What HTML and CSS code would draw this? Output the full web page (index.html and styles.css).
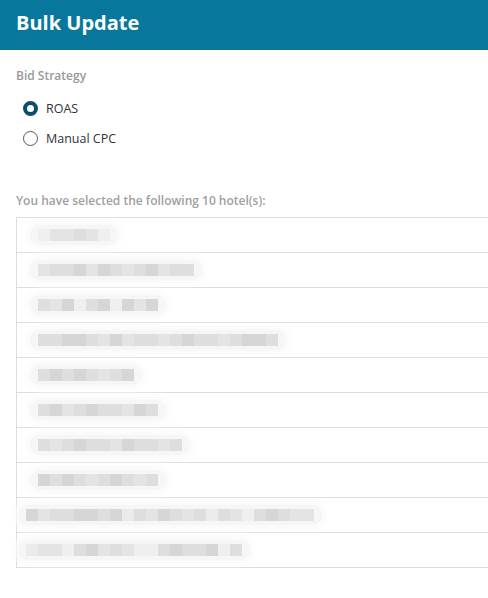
FILE: index.html
```html
<!DOCTYPE html>
<html>
<head>
<meta charset="utf-8">
<link rel="stylesheet" href="styles.css">
</head>
<body>
<header class="header"><h1 class="title">Bulk Update</h1></header>
<main class="content">
  <div class="label">Bid Strategy</div>
  <div class="radios">
    <label class="radio"><span class="dot checked"></span>ROAS</label>
    <label class="radio"><span class="dot"></span>Manual CPC</label>
  </div>
  <div class="selected">You have selected the following 10 hotel(s):</div>
  <div class="list">
    <div class="row"><span class="blur" style="width:72px"><i class="a"></i><i class="b"></i><i class="b"></i><i class="c"></i><i class="b"></i><i class="a"></i></span></div>
    <div class="row"><span class="blur" style="width:156px"><i class="b"></i><i class="c"></i><i class="c"></i><i class="d"></i><i class="b"></i><i class="d"></i><i class="c"></i><i class="b"></i><i class="c"></i><i class="d"></i><i class="b"></i><i class="c"></i><i class="c"></i></span></div>
    <div class="row"><span class="blur" style="width:120px"><i class="c"></i><i class="b"></i><i class="d"></i><i class="a"></i><i class="c"></i><i class="d"></i><i class="a"></i><i class="d"></i><i class="b"></i><i class="d"></i></span></div>
    <div class="row"><span class="blur" style="width:240px"><i class="c"></i><i class="c"></i><i class="d"></i><i class="d"></i><i class="c"></i><i class="b"></i><i class="d"></i><i class="b"></i><i class="c"></i><i class="c"></i><i class="b"></i><i class="c"></i><i class="d"></i><i class="c"></i><i class="c"></i><i class="b"></i><i class="c"></i><i class="d"></i><i class="d"></i><i class="c"></i></span></div>
    <div class="row"><span class="blur" style="width:96px"><i class="c"></i><i class="d"></i><i class="c"></i><i class="d"></i><i class="c"></i><i class="b"></i><i class="c"></i><i class="d"></i></span></div>
    <div class="row"><span class="blur" style="width:120px"><i class="c"></i><i class="d"></i><i class="b"></i><i class="c"></i><i class="d"></i><i class="c"></i><i class="c"></i><i class="b"></i><i class="d"></i><i class="c"></i></span></div>
    <div class="row"><span class="blur" style="width:144px"><i class="c"></i><i class="b"></i><i class="c"></i><i class="d"></i><i class="c"></i><i class="c"></i><i class="b"></i><i class="d"></i><i class="c"></i><i class="c"></i><i class="b"></i><i class="c"></i></span></div>
    <div class="row"><span class="blur" style="width:120px"><i class="d"></i><i class="c"></i><i class="d"></i><i class="c"></i><i class="b"></i><i class="c"></i><i class="d"></i><i class="c"></i><i class="b"></i><i class="c"></i></span></div>
    <div class="row"><span class="blur wide" style="width:288px"><i class="d"></i><i class="b"></i><i class="c"></i><i class="c"></i><i class="d"></i><i class="d"></i><i class="c"></i><i class="d"></i><i class="e"></i><i class="c"></i><i class="b"></i><i class="d"></i><i class="c"></i><i class="b"></i><i class="c"></i><i class="e"></i><i class="c"></i><i class="b"></i><i class="a"></i><i class="c"></i><i class="d"></i><i class="c"></i><i class="b"></i><i class="b"></i></span></div>
    <div class="row"><span class="blur wide" style="width:216px"><i class="e"></i><i class="b"></i><i class="b"></i><i class="a"></i><i class="c"></i><i class="d"></i><i class="b"></i><i class="c"></i><i class="b"></i><i class="a"></i><i class="a"></i><i class="c"></i><i class="d"></i><i class="c"></i><i class="c"></i><i class="d"></i><i class="a"></i><i class="c"></i></span></div>
  </div>
</main>
</body>
</html>
```
FILE: styles.css
```css
html, body {
  margin: 0;
  padding: 0;
  background: #ffffff;
  overflow: hidden;
}
body {
  width: 488px;
  font-family: "Open Sans", "Noto Sans", sans-serif;
  color: #333333;
}
.header {
  height: 50px;
  background: #08779c;
  display: flex;
  align-items: center;
  padding: 0 16px;
}
.title {
  margin: 0;
  color: #ffffff;
  font-size: 20px;
  font-weight: 700;
  line-height: 1;
  position: relative;
  top: -2px;
}
.content {
  padding: 18px 0 0 16px;
}
.label {
  font-size: 12px;
  color: #999999;
  font-weight: 600;
  line-height: 16px;
}
.radios {
  display: flex;
  flex-direction: column;
  gap: 13px;
  padding: 16px 0 0 7px;
}
.radio {
  display: flex;
  align-items: center;
  gap: 8px;
  font-size: 12.5px;
  color: #333333;
  line-height: 17px;
}
.dot {
  width: 15px;
  height: 15px;
  box-sizing: border-box;
  border-radius: 50%;
  border: 1px solid #555555;
  background: #fff;
}
.dot.checked {
  border: 4px solid #0b4b70;
  background: #ffffff;
}
.selected {
  margin-top: 46px;
  font-size: 12px;
  font-weight: 600;
  color: #a0a0a0;
  line-height: 16px;
}
.list {
  margin-top: 8px;
  width: 472px;
  box-sizing: border-box;
  border: 1px solid #dddddd;
  border-right: none;
}
.row {
  height: 34px;
  border-top: 1px solid #dddddd;
  display: flex;
  align-items: center;
  padding-left: 19px;
}
.row:first-child {
  border-top: none;
}
.blur {
  display: flex;
  height: 12px;
  padding: 4px 8px;
  margin-left: -6px;
  border-radius: 10px;
  background: #f6f6f6;
  box-shadow: 0 0 6px 4px #fafafa;
}
.blur.wide {
  margin-left: -18px;
}
.blur i {
  width: 12px;
  height: 12px;
  flex: none;
}
.a { background: #efefef; }
.b { background: #e4e4e4; }
.c { background: #dedede; }
.d { background: #d6d6d6; }
.e { background: #ebebeb; }
```
